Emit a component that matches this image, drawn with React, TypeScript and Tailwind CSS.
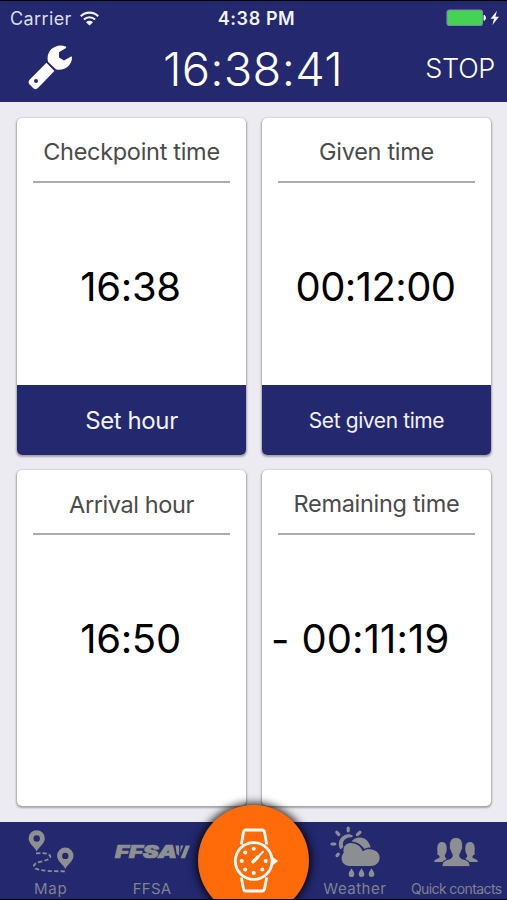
import type { ReactNode } from 'react';
import clsx from 'clsx';

function WifiIcon() {
  return (
    <svg width="19" height="15" viewBox="0 0 19 15" fill="none" stroke="#f2f2fb" strokeWidth="2.1">
      <path d="M0.8 5.2C5.6 0.4 13.4 0.4 18.2 5.2" />
      <path d="M3.9 8.5C7 5.5 12 5.5 15.1 8.5" />
      <path d="M9.5 14.6L6 11.2C8 9.4 11 9.4 13 11.2Z" fill="#f2f2fb" stroke="none" />
    </svg>
  );
}

function BatteryIcon() {
  return (
    <svg width="54" height="18" viewBox="0 0 54 18">
      <rect x="1" y="1" width="35.5" height="15.5" rx="2.5" fill="#43d551" stroke="#7f87a8" strokeWidth="1.2" />
      <path d="M38 6.2C40 6.8 40 10.8 38 11.4Z" fill="#f2f2fb" stroke="#f2f2fb" />
      <path d="M51 1.8L44.5 9.8H48L46.4 16L53 7.8H49.4Z" fill="#f2f2fb" />
    </svg>
  );
}

function WrenchIcon() {
  return (
    <svg width="46" height="46" viewBox="0 0 46 46" fill="#fff">
      <path d="M37.6 1.5C29.6-1.8 20 3.6 19.6 12.6C19.5 14.2 19.7 15.6 20.2 17L27.8 24.2C35.8 26.6 43.8 21 44 12.8C44 11.6 43.4 11.4 42.6 11.8L36 15.6L31 12.6V7.2L37.6 3.2C38.4 2.6 38.4 1.9 37.6 1.5Z" />
      <path
        fillRule="evenodd"
        d="M18.4 17.8L1.8 34.4C0.3 36 0.2 38 1.6 39.6L5.4 43.2C7 44.6 8.6 44.4 10.2 42.8L26.4 26ZM8 33.9A2 2 0 1 1 8 37.9A2 2 0 1 1 8 33.9Z"
      />
    </svg>
  );
}

function MapIcon() {
  return (
    <svg width="46" height="44" viewBox="0 0 46 44" fill="#8c9091">
      <path fillRule="evenodd" d="M8.7 21.4C6.6 17 0.6 13.8 0.6 8.3A8.1 8.1 0 0 1 16.8 8.3C16.8 13.8 10.8 17 8.7 21.4ZM8.7 5.3A3.2 3.2 0 1 0 8.7 11.7A3.2 3.2 0 1 0 8.7 5.3Z" />
      <path fillRule="evenodd" d="M37.3 38.9C35.2 34.5 29.1 31.3 29.1 25.8A8.2 8.2 0 0 1 45.5 25.8C45.5 31.3 39.4 34.5 37.3 38.9ZM37.3 22.7A3.2 3.2 0 1 0 37.3 29.1A3.2 3.2 0 1 0 37.3 22.7Z" />
      <path
        d="M8 23.4C14 22.8 20 23 22 25.5C24 29 17 30.8 12 31.8C6 33 4.4 36 7.5 38.5C12 41 27 41.3 39 41.3"
        fill="none"
        stroke="#8c9091"
        strokeWidth="1.8"
        strokeDasharray="4.2 2.2"
      />
    </svg>
  );
}

function FfsaLogo() {
  return (
    <svg width="80" height="28" viewBox="-2 -5 80 28" fill="#8c9091">
      <text x="1" y="15" textLength="62" lengthAdjust="spacingAndGlyphs" fontFamily="Inter" fontWeight="900" fontStyle="italic" fontSize="17.5" stroke="#8c9091" strokeWidth="0.7">
        FFSA
      </text>
      <path d="M61.5 2.4H65L65.2 13L62.6 10.5Z" />
      <path d="M71.6 2.4H76L71 15.2H66.6Z" />
      <path d="M66.6 2.4H69.4L66.2 9.6Z" />
    </svg>
  );
}

function WatchIcon() {
  return (
    <svg width="46" height="66" viewBox="0 0 46 66" fill="none" stroke="#fff" strokeWidth="2.8" strokeLinejoin="round">
      <path d="M9.3 16.5L11.4 4.5Q11.8 2 14.2 2H29.8Q32.2 2 32.6 4.5L34.7 16.5" />
      <path d="M9.3 49.5L11.4 60.5Q11.8 63 14.2 63H29.8Q32.2 63 32.6 60.5L34.7 49.5" />
      <circle cx="21.7" cy="33" r="18.4" />
      <path d="M40 29.5L45 33L40 36.8Z" fill="#fff" stroke="#fff" strokeWidth="1.5" />
      <path d="M21.7 33L31 23.7" strokeLinecap="round" strokeWidth="2" />
      <path d="M21 33.8L26 28.8" strokeLinecap="round" strokeWidth="3.4" />
      <g fill="#fff" stroke="none">
        <circle cx="21.7" cy="20.8" r="2" />
        <circle cx="13.2" cy="24.5" r="2" />
        <circle cx="9.7" cy="33" r="2" />
        <circle cx="13.2" cy="41.5" r="2" />
        <circle cx="21.7" cy="45" r="2" />
        <circle cx="30.2" cy="41.5" r="2" />
        <circle cx="33.7" cy="33" r="2" />
      </g>
    </svg>
  );
}

function WeatherIcon() {
  return (
    <svg width="50" height="52" viewBox="0 0 50 52" fill="#8c8f91">
      <g stroke="#8c8f91" strokeWidth="3.2" strokeLinecap="round">
        <path d="M18.2 2V4.8" />
        <path d="M6.8 6.3L8.8 8.6" />
        <path d="M30 6.3L27.4 8.6" />
        <path d="M2 18H4.8" />
        <path d="M8.3 28.2L7 29.6" />
      </g>
      <path d="M10.2 23.5C6 15.5 12 7.4 20.5 8.4L23 9.8L22 11.2C15 10.5 11.4 16 13.4 21Z" />
      <path d="M21.5 15.4C25 10.6 33 10 37 14.5C39 16.6 40.2 19.2 40.6 21.6C37.5 21 36 22 34.3 23C31.2 18 27 16 21.5 15.4Z" />
      <path d="M20.4 17C26 17 31 20 32.6 25.2C35.5 23 39 22.7 41.7 23.6C47 24.4 50 28.3 49.6 32.3C49.3 37 45.5 40 41 40H19.5C14.8 40 11.6 36.6 11.6 32.6C11.6 30 12.6 28 13.8 26.8C12.4 21.6 15.5 17.3 20.4 17Z" />
      <path d="M21.5 42.2C23 45 24.3 46 24.3 48.2A2.8 2.8 0 0 1 18.7 48.2C18.7 46 20 45 21.5 42.2Z" />
      <path d="M31.5 42.2C33 45 34.3 46 34.3 48.2A2.8 2.8 0 0 1 28.7 48.2C28.7 46 30 45 31.5 42.2Z" />
      <path d="M41.5 42.2C43 45 44.3 46 44.3 48.2A2.8 2.8 0 0 1 38.7 48.2C38.7 46 40 45 41.5 42.2Z" />
    </svg>
  );
}

function ContactsIcon() {
  const side = 'M8 5C11.8 5 13 8 12.7 13C12.6 16 10.8 17.6 10.8 18.8C10.8 20.8 12.6 21.2 12.6 22.2C10.4 23.2 9 23.8 8.5 25H0C0.3 22.5 2.8 22 5 21C6 20.5 5.8 19.6 4.8 18.3L3.2 17.2C3.8 15 3 12.8 3.3 10.6C3.6 7 5 5 8 5Z';
  return (
    <svg width="44" height="30" viewBox="0 0 44 30" fill="#8c8f91">
      <path d={side} />
      <path d={side} transform="translate(44 0) scale(-1 1)" />
      <path d="M22 0.5C26.8 0.5 28.8 4 28.4 9.2C28.9 11 28 12.5 27.5 13.3C27 15.5 26 16.7 25.7 17.7C25.3 21.8 28.5 21.8 32 23C35 24.2 35.8 26.5 36 29.5H8C8.2 26.5 9 24.2 12 23C15.5 21.8 18.7 21.8 18.3 17.7C18 16.7 17 15.5 16.5 13.3C16 12.5 15.1 11 15.6 9.2C15.2 4 17.2 0.5 22 0.5Z" stroke="#23286f" strokeWidth="0.8" />
    </svg>
  );
}

interface TimeCardProps {
  title: string;
  titleClass?: string;
  time: string;
  timeClass?: string;
  negative?: boolean;
  action?: string;
  actionClass?: string;
}

function TimeCard({ title, titleClass, time, timeClass, negative, action, actionClass }: TimeCardProps) {
  return (
    <div className="flex flex-col overflow-hidden rounded-[5px] bg-white shadow-[0_1px_2px_1px_rgba(0,0,0,0.3)]">
      <div className="mx-4 flex h-[65px] shrink-0 items-center justify-center border-b-2 border-[#acacac]">
        <h2 className={clsx('whitespace-nowrap text-[23.5px] text-[#4b4b4b]', titleClass)}>{title}</h2>
      </div>
      <div className={clsx('flex h-[202px] items-center pt-1.5 text-[40px] text-black', negative ? 'pl-[9px]' : 'justify-center pr-0.5')}>
        {/* the sign sits a little lower than the digits' middle */}
        {negative && <span className="mr-3 translate-y-px">-</span>}
        <span className={clsx('whitespace-nowrap', timeClass)}>{time}</span>
      </div>
      {action && (
        <button className={clsx('flex-1 whitespace-nowrap bg-[#23286f] pt-0.5 text-[#f0f1fc]', actionClass)}>{action}</button>
      )}
    </div>
  );
}

function Tab({ label, labelClass, children }: { label: string; labelClass: string; children?: ReactNode }) {
  return (
    <div className="flex w-[101.4px] flex-col items-center">
      <div className="flex h-[59px] items-center justify-center pt-px">{children}</div>
      <span className={clsx('whitespace-nowrap leading-4 text-[#7f8290]', labelClass)}>{label}</span>
    </div>
  );
}

export default function App() {
  return (
    <div className="flex h-[900px] w-[507px] flex-col overflow-hidden border-y border-black bg-[#ebebf1] font-['Inter',sans-serif]">
      <header className="h-[101px] shrink-0 bg-[#23286f]">
        <div className="grid h-[34px] grid-cols-[1fr_auto_1fr] items-center pr-[7px] pl-[10px]">
          <div className="flex items-center gap-2">
            <span className="text-[18px] tracking-[0.4px] text-[#dcddea]">Carrier</span>
            <WifiIcon />
          </div>
          <span className="pl-[3px] text-center text-[18px] font-semibold tracking-[0.6px] text-[#f2f2fb]">4:38 PM</span>
          <div className="flex justify-end">
            <BatteryIcon />
          </div>
        </div>
        <div className="grid h-[67px] grid-cols-[1fr_auto_1fr] items-center pr-3 pb-px pl-7">
          <WrenchIcon />
          <span className="-ml-[17px] text-center text-[47px] leading-none font-light tracking-[0.3px] text-white">16:38:41</span>
          <span className="text-right text-[27px] leading-none font-light tracking-[-0.3px] text-white">STOP</span>
        </div>
      </header>

      <main className="grid flex-1 grid-cols-2 grid-rows-[337px_336px] gap-x-4 gap-y-[15px] pt-4 pr-4 pl-[17px]">
        <TimeCard
          title="Checkpoint time"
          titleClass="pt-1 tracking-[-0.3px]"
          time="16:38"
          timeClass="tracking-[-0.3px]"
          action="Set hour"
          actionClass="text-[24px] tracking-[-0.4px]"
        />
        <TimeCard
          title="Given time"
          titleClass="pt-1 tracking-[-0.3px]"
          time="00:12:00"
          timeClass="tracking-[-0.6px]"
          action="Set given time"
          actionClass="text-[21px] tracking-[-0.4px]"
        />
        <TimeCard title="Arrival hour" titleClass="pt-[7px] tracking-[-0.4px]" time="16:50" timeClass="tracking-[-0.3px]" />
        <TimeCard title="Remaining time" titleClass="pt-1 tracking-[-0.3px]" time="00:11:19" timeClass="tracking-[0.1px]" negative />
      </main>

      <nav className="relative flex h-[77px] shrink-0 bg-[#23286f]">
        <Tab label="Map" labelClass="text-[15px] tracking-[0.8px]">
          <MapIcon />
        </Tab>
        <Tab label="FFSA" labelClass="text-[15px] tracking-[0.3px]">
          <FfsaLogo />
        </Tab>
        <div className="w-[101.4px]" />
        <Tab label="Weather" labelClass="text-[15px] tracking-[0.5px]">
          <WeatherIcon />
        </Tab>
        <Tab label="Quick contacts" labelClass="text-[14px] tracking-[-0.6px]">
          <ContactsIcon />
        </Tab>
        <button className="absolute -top-[17px] left-[198px] flex size-[111px] items-center justify-center rounded-full bg-[#ff6b08] pl-0.5 shadow-[0_0_9px_2px_rgba(0,0,0,0.85)]">
          <WatchIcon />
        </button>
      </nav>
    </div>
  );
}
